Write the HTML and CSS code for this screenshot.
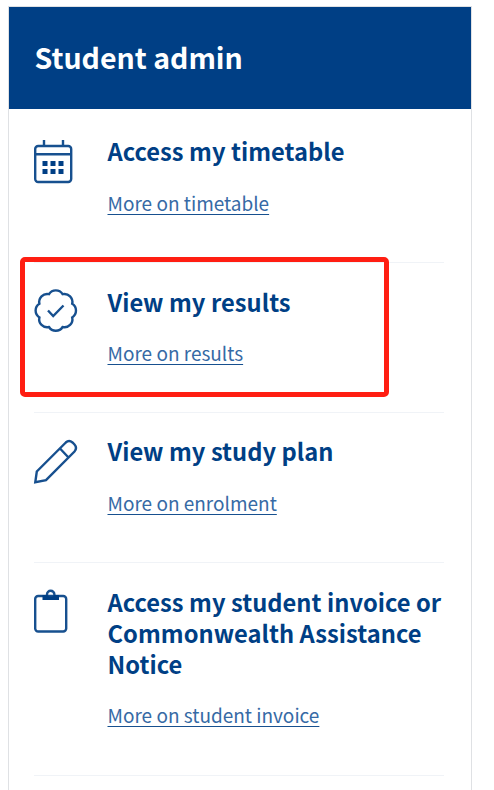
FILE: index.html
```html
<!DOCTYPE html>
<html lang="en">
<head>
    <meta charset="UTF-8">
    <meta name="viewport" content="width=device-width, initial-scale=1.0">
    <title>Student admin</title>
    <link rel="stylesheet" href="styles.css">
</head>
<body>
    <div class="card">
        <h2 class="card-header">Student admin</h2>
        <ul class="links">
            <li class="item">
                <svg class="icon" viewBox="0 0 44 44">
                    <rect x="1.2" y="6" width="36" height="36" rx="3"/>
                    <path d="M1.2 14.2h36M10 0v6M29 0v6"/>
                    <path class="fill" d="M8.5 21h5v5h-5zM16.5 21h5v5h-5zM24.5 21h5v5h-5zM8.5 29h5v5h-5zM16.5 29h5v5h-5zM24.5 29h5v5h-5z"/>
                </svg>
                <div class="text">
                    <h3>Access my timetable</h3>
                    <a href="#">More on timetable</a>
                </div>
            </li>
            <li class="item">
                <svg class="icon" viewBox="0 0 44 44">
                    <path d="M15 4.2A8 8 0 0 1 28.600 4.200A8 8 0 0 1 38.200 13.800A8 8 0 0 1 38.200 27.400A8 8 0 0 1 28.600 37A8 8 0 0 1 15 37A8 8 0 0 1 5.400 27.400A8 8 0 0 1 5.400 13.800A8 8 0 0 1 15 4.200z"/>
                    <path d="M14 20.500l5.200 5.500L29.500 15.500"/>
                </svg>
                <div class="text">
                    <h3>View my results</h3>
                    <a href="#">More on results</a>
                </div>
                <!-- highlighted entry -->
                <span class="highlight"></span>
            </li>
            <li class="item">
                <svg class="icon" viewBox="0 0 44 44">
                    <path d="M1.300 42.200L2.800 31.500L31.800 2.500Q35 -0.500 38.500 2.500L40.500 4.500Q43.500 8 40.500 11.500L12 40.200zM26 8.500l8.500 9"/>
                </svg>
                <div class="text">
                    <h3>View my study plan</h3>
                    <a href="#">More on enrolment</a>
                </div>
            </li>
            <li class="item">
                <svg class="icon" viewBox="0 0 44 44">
                    <rect x="1.200" y="6" width="31" height="35.500" rx="3"/>
                    <path d="M13 6V4.500a3.700 3.700 0 0 1 7.400 0V6"/>
                    <path class="fill" d="M8.500 5h5l1.500 1.500h3.500L20 5h5v5h-16.500z"/>
                </svg>
                <div class="text">
                    <h3>Access my student invoice or Commonwealth Assistance Notice</h3>
                    <a href="#">More on student invoice</a>
                </div>
            </li>
        </ul>
    </div>
</body>
</html>
```
FILE: styles.css
```css
body {
    margin: 0;
    padding: 6px 22px 0 7.5px;
    height: 784px;
    overflow: hidden;
    background-color: #fff;
    font-family: "Noto Sans CJK SC", "Source Sans Pro", sans-serif;
    color: #003f85;
}

.card {
    border: 1px solid #dfe1e4;
    height: 800px;
}

.card-header {
    margin: 0;
    padding: 30px 26px 32px;
    height: 40px;
    line-height: 40px;
    background-color: #003f85;
    color: #fff;
    font-size: 28.5px;
    font-weight: bold;
}

.links {
    list-style: none;
    margin: 0;
    padding: 4px 27px 0 25.5px;
}

.item {
    position: relative;
    display: flex;
    gap: 29.5px;
    padding: 23px 0 44px;
    border-bottom: 1px solid #f0f3f7;
}

.item:nth-child(even) {
    padding-top: 24px;
    padding-bottom: 43px;
}

.item:last-child {
    padding-bottom: 44px;
}

.icon {
    width: 44px;
    height: 44px;
    margin-top: 4px;
    flex-shrink: 0;
    overflow: visible;
    fill: none;
    stroke: #17508f;
    stroke-width: 2.4;
}

.item:nth-child(even) .icon {
    margin-top: 3px;
}

.icon .fill {
    fill: #003f85;
    stroke: none;
}

.text {
    flex: 1;
}

.text h3 {
    margin: 0 -4px 21px 0;
    font-size: 23.7px;
    letter-spacing: 0.03px;
    font-weight: bold;
    line-height: 31px;
}

.item:nth-child(even) h3 {
    margin-bottom: 20px;
}

.item:nth-child(even) a {
    margin-bottom: 1px;
}

.text a {
    display: block;
    width: fit-content;
    color: #366aa5;
    font-size: 19px;
    font-weight: 400;
    line-height: 30px;
    text-decoration-color: #17508f;
    text-decoration-thickness: 1px;
    text-underline-offset: 3px;
}

/* red frame laid over the row */
.highlight {
    position: absolute;
    top: -6px;
    left: -14px;
    width: 359px;
    height: 130px;
    border: 5px solid #ff1e12;
    border-radius: 5px;
}
```
